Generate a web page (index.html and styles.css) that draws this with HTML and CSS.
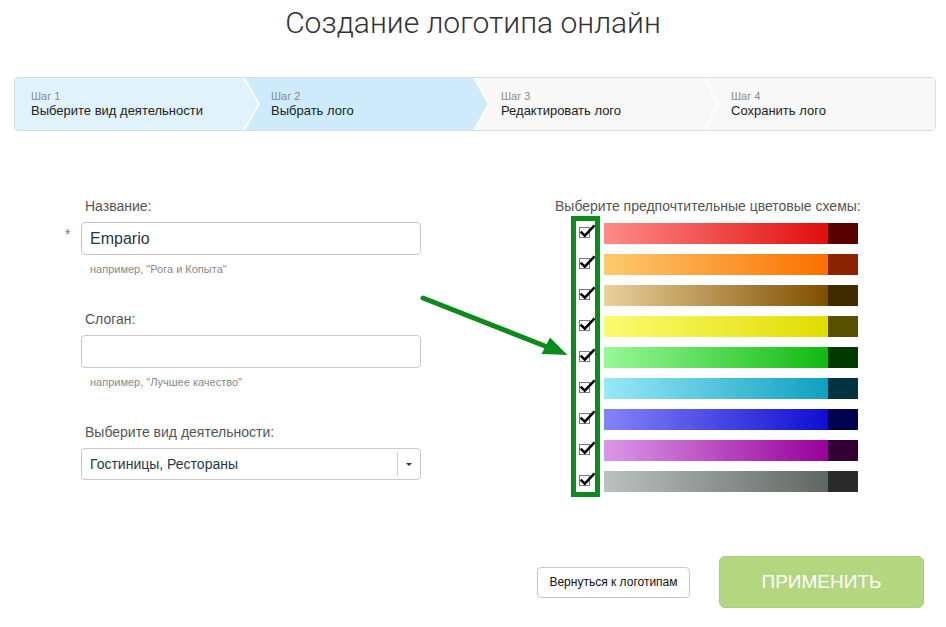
FILE: index.html
```html
<!DOCTYPE html>
<html lang="ru">
<head>
<meta charset="utf-8">
<title>Создание логотипа онлайн</title>
<link rel="stylesheet" href="styles.css">
</head>
<body>
<div class="page">
  <h1 class="title">Создание логотипа онлайн</h1>

  <div class="steps">
    <div class="step step-first">
      <div class="step-num">Шаг 1</div>
      <div class="step-name">Выберите вид деятельности</div>
    </div>
    <div class="step step-active">
      <div class="step-num">Шаг 2</div>
      <div class="step-name">Выбрать лого</div>
    </div>
    <div class="step">
      <div class="step-num">Шаг 3</div>
      <div class="step-name">Редактировать лого</div>
    </div>
    <div class="step step-last">
      <div class="step-num">Шаг 4</div>
      <div class="step-name">Сохранить лого</div>
    </div>
  </div>

  <div class="form">
    <div class="left">
      <div class="field">
        <div class="label">Название:</div>
        <span class="star">*</span>
        <div class="input">Empario</div>
        <div class="hint">например, "Рога и Копыта"</div>
      </div>
      <div class="field">
        <div class="label">Слоган:</div>
        <div class="input"></div>
        <div class="hint">например, "Лучшее качество"</div>
      </div>
      <div class="field">
        <div class="label">Выберите вид деятельности:</div>
        <div class="input select">
          <span class="select-text">Гостиницы, Рестораны</span>
          <span class="select-divider"></span>
          <span class="select-caret"></span>
        </div>
      </div>
    </div>

    <div class="right">
      <div class="right-title">Выберите предпочтительные цветовые схемы:</div>
      <div class="schemes">
        <div class="checkcol">
          <svg class="check" viewBox="0 0 19 21"><rect x="3.5" y="4.5" width="10" height="10" fill="#fff" stroke="#7a7a7a"/><path d="M4.6 8.6 L8.8 12.6 L18.6 2.4" fill="none" stroke="#000" stroke-width="2.6"/></svg>
          <svg class="check" viewBox="0 0 19 21"><rect x="3.5" y="4.5" width="10" height="10" fill="#fff" stroke="#7a7a7a"/><path d="M4.6 8.6 L8.8 12.6 L18.6 2.4" fill="none" stroke="#000" stroke-width="2.6"/></svg>
          <svg class="check" viewBox="0 0 19 21"><rect x="3.5" y="4.5" width="10" height="10" fill="#fff" stroke="#7a7a7a"/><path d="M4.6 8.6 L8.8 12.6 L18.6 2.4" fill="none" stroke="#000" stroke-width="2.6"/></svg>
          <svg class="check" viewBox="0 0 19 21"><rect x="3.5" y="4.5" width="10" height="10" fill="#fff" stroke="#7a7a7a"/><path d="M4.6 8.6 L8.8 12.6 L18.6 2.4" fill="none" stroke="#000" stroke-width="2.6"/></svg>
          <svg class="check" viewBox="0 0 19 21"><rect x="3.5" y="4.5" width="10" height="10" fill="#fff" stroke="#7a7a7a"/><path d="M4.6 8.6 L8.8 12.6 L18.6 2.4" fill="none" stroke="#000" stroke-width="2.6"/></svg>
          <svg class="check" viewBox="0 0 19 21"><rect x="3.5" y="4.5" width="10" height="10" fill="#fff" stroke="#7a7a7a"/><path d="M4.6 8.6 L8.8 12.6 L18.6 2.4" fill="none" stroke="#000" stroke-width="2.6"/></svg>
          <svg class="check" viewBox="0 0 19 21"><rect x="3.5" y="4.5" width="10" height="10" fill="#fff" stroke="#7a7a7a"/><path d="M4.6 8.6 L8.8 12.6 L18.6 2.4" fill="none" stroke="#000" stroke-width="2.6"/></svg>
          <svg class="check" viewBox="0 0 19 21"><rect x="3.5" y="4.5" width="10" height="10" fill="#fff" stroke="#7a7a7a"/><path d="M4.6 8.6 L8.8 12.6 L18.6 2.4" fill="none" stroke="#000" stroke-width="2.6"/></svg>
          <svg class="check" viewBox="0 0 19 21"><rect x="3.5" y="4.5" width="10" height="10" fill="#fff" stroke="#7a7a7a"/><path d="M4.6 8.6 L8.8 12.6 L18.6 2.4" fill="none" stroke="#000" stroke-width="2.6"/></svg>
        </div>
        <div class="bars">
          <div class="bar s-red"><span class="bar-grad"></span><span class="bar-dark"></span></div>
          <div class="bar s-orange"><span class="bar-grad"></span><span class="bar-dark"></span></div>
          <div class="bar s-tan"><span class="bar-grad"></span><span class="bar-dark"></span></div>
          <div class="bar s-yellow"><span class="bar-grad"></span><span class="bar-dark"></span></div>
          <div class="bar s-green"><span class="bar-grad"></span><span class="bar-dark"></span></div>
          <div class="bar s-cyan"><span class="bar-grad"></span><span class="bar-dark"></span></div>
          <div class="bar s-blue"><span class="bar-grad"></span><span class="bar-dark"></span></div>
          <div class="bar s-purple"><span class="bar-grad"></span><span class="bar-dark"></span></div>
          <div class="bar s-gray"><span class="bar-grad"></span><span class="bar-dark"></span></div>
        </div>
      </div>
    </div>
  </div>

  <div class="actions">
    <button class="btn-back" type="button">Вернуться к логотипам</button>
    <button class="btn-apply" type="button">ПРИМЕНИТЬ</button>
  </div>

  <svg class="arrow" viewBox="0 0 946 627" width="946" height="627">
    <line x1="423" y1="298" x2="550" y2="348" stroke="#0b8b1c" stroke-width="5" stroke-linecap="round"/>
    <polygon points="550,337.5 567.5,355 541.5,354" fill="#0b8b1c"/>
  </svg>
</div>
</body>
</html>
```

FILE: styles.css
```css
body {
  margin: 0;
  background: #fff;
}

.page {
  position: relative;
  width: 946px;
  height: 627px;
  overflow: hidden;
  font-family: "Liberation Sans", Arial, sans-serif;
}

.title {
  margin: 0;
  padding-top: 5px;
  height: 36px;
  line-height: 36px;
  text-align: center;
  font-family: Roboto, "Liberation Sans", sans-serif;
  font-weight: 300;
  font-size: 30px;
  color: #333;
}

/* Steps */
.steps {
  margin: 36px 10px 0 14px;
  height: 52px;
  border: 1px solid #dcdcdc;
  border-radius: 4px;
  display: flex;
  overflow: hidden;
  background: #fff;
}

.step {
  flex: 0 0 243px;
  box-sizing: border-box;
  margin-left: -13px;
  padding: 12px 0 0 26px;
  background: #f8f8f8;
  clip-path: polygon(0 0, calc(100% - 15px) 0, 100% 50%, calc(100% - 15px) 100%, 0 100%, 15px 50%);
}

.step-first {
  margin-left: 0;
  padding-left: 16px;
  background: #e0f3fc;
  clip-path: polygon(0 0, calc(100% - 15px) 0, 100% 50%, calc(100% - 15px) 100%, 0 100%);
}

.step-active {
  background: #cdebfb;
}

.step-last {
  flex: 1 1 auto;
  clip-path: polygon(0 0, 100% 0, 100% 100%, 0 100%, 15px 50%);
}

.step-num {
  font-size: 11px;
  line-height: 13px;
  color: #8a8a8a;
}

.step-name {
  font-size: 13px;
  line-height: 15px;
  color: #222;
}

/* Form */
.form {
  display: flex;
  padding: 67px 0 0 61px;
}

.left {
  width: 360px;
}

.field {
  display: grid;
  grid-template-columns: 20px 340px;
}

.field + .field {
  margin-top: 35px;
}

.label {
  grid-column: 2;
  padding-left: 4px;
  margin-bottom: 8px;
  font-size: 14px;
  line-height: 16px;
  color: #555;
}

.star {
  grid-column: 1;
  padding: 4px 0 0 4px;
  font-size: 14px;
  line-height: 16px;
  color: #777;
}

.input {
  grid-column: 2;
  height: 33px;
  box-sizing: border-box;
  border: 1px solid #c8c8c8;
  border-radius: 4px;
  padding: 0 8px;
  display: flex;
  align-items: center;
  font-size: 16px;
  color: #1d3a47;
}

.hint {
  grid-column: 2;
  margin-top: 8px;
  padding-left: 9px;
  font-size: 11px;
  line-height: 13px;
  color: #888;
}

.select {
  height: 32px;
  padding-right: 0;
  font-size: 14px;
}

.select-text {
  flex: 1;
}

.select-divider {
  width: 1px;
  height: 24px;
  background: #cfcfcf;
}

.select-caret {
  width: 22px;
  display: flex;
  justify-content: center;
  align-items: center;
}

.select-caret::before {
  content: "";
  border-left: 3px solid transparent;
  border-right: 3px solid transparent;
  border-top: 3px solid #1d3a47;
}

/* Right column */
.right {
  margin-left: 134px;
}

.right-title {
  font-size: 14px;
  line-height: 16px;
  color: #555;
}

.schemes {
  display: flex;
  margin: 2px 0 0 16px;
}

.checkcol {
  width: 19px;
  border: 5px solid #0b8b1c;
  padding-top: 2px;
  display: flex;
  flex-direction: column;
  gap: 10px;
}

.check {
  display: block;
  width: 19px;
  height: 21px;
}

.bars {
  margin: 7px 0 0 4px;
  display: flex;
  flex-direction: column;
  gap: 10px;
}

.bar {
  display: flex;
  width: 254px;
  height: 21px;
}

.bar-grad {
  flex: 1;
}

.bar-dark {
  width: 30px;
}

.s-red .bar-grad { background: linear-gradient(to right, #ff8a8a, #e00e0e); }
.s-red .bar-dark { background: #580000; }
.s-orange .bar-grad { background: linear-gradient(to right, #fcca70, #fb7000); }
.s-orange .bar-dark { background: #8a2400; }
.s-tan .bar-grad { background: linear-gradient(to right, #e9d19c, #7f4f00); }
.s-tan .bar-dark { background: #402a00; }
.s-yellow .bar-grad { background: linear-gradient(to right, #fbfb72, #e0dd00); }
.s-yellow .bar-dark { background: #565000; }
.s-green .bar-grad { background: linear-gradient(to right, #98f898, #10ba10); }
.s-green .bar-dark { background: #003a00; }
.s-cyan .bar-grad { background: linear-gradient(to right, #98e8f9, #0ea0c0); }
.s-cyan .bar-dark { background: #033340; }
.s-blue .bar-grad { background: linear-gradient(to right, #8484f8, #0e0ed2); }
.s-blue .bar-dark { background: #000050; }
.s-purple .bar-grad { background: linear-gradient(to right, #da98e8, #98009a); }
.s-purple .bar-dark { background: #330033; }
.s-gray .bar-grad { background: linear-gradient(to right, #bac1c1, #5f6762); }
.s-gray .bar-dark { background: #282b28; }

/* Actions */
.actions {
  display: flex;
  justify-content: flex-end;
  align-items: center;
  gap: 29px;
  margin-top: 59px;
  padding-right: 22px;
}

.btn-back {
  width: 153px;
  height: 31px;
  box-sizing: border-box;
  border: 1px solid #c8c8c8;
  border-radius: 4px;
  background: #fff;
  font-family: "Liberation Sans", Arial, sans-serif;
  font-size: 12px;
  color: #111;
  padding: 0;
}

.btn-apply {
  width: 205px;
  height: 52px;
  box-sizing: border-box;
  border: 1px solid #a9cf77;
  border-radius: 6px;
  background: #b3d67f;
  font-family: "Liberation Sans", Arial, sans-serif;
  font-size: 19px;
  color: #fff;
  padding: 0;
}

/* Arrow overlay */
.arrow {
  position: absolute;
  left: 0;
  top: 0;
  pointer-events: none;
}
```
